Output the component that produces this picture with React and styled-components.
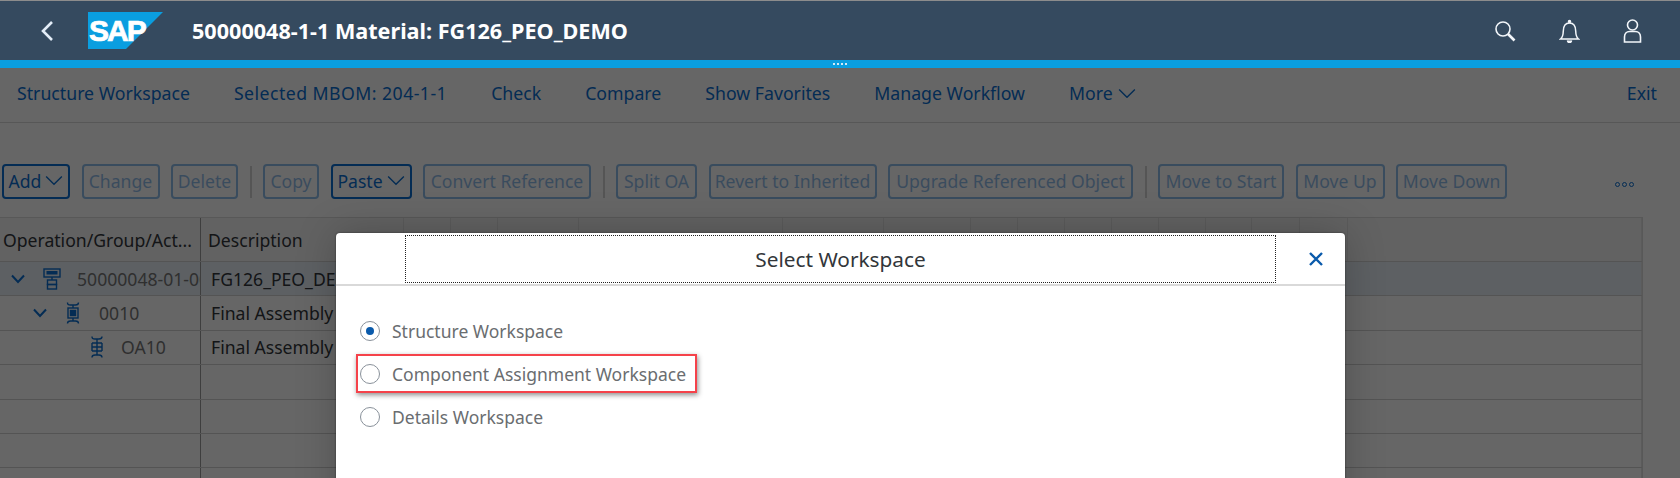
import React from "react";
import styled, { createGlobalStyle } from "styled-components";

const GlobalStyle = createGlobalStyle`
  html, body {
    margin: 0;
    height: 100%;
    overflow: hidden;
    background: #fff;
    font-family: "Noto Sans", "Open Sans", Arial, sans-serif;
  }
`;

const Page = styled.div`
  height: 478px;
  display: flex;
  flex-direction: column;
  overflow: hidden;
`;

const ShellBar = styled.header`
  height: 59px;
  flex: none;
  display: flex;
  align-items: center;
  background: #354a5f;
  border-top: 1px solid #8c8c8c;
  color: #fff;
`;

const BackButton = styled.div`
  width: 88px;
  display: flex;
  justify-content: center;
  padding-left: 6px;
  box-sizing: border-box;
`;

const Logo = styled.svg`
  width: 75px;
  height: 37px;
  display: block;
  flex: none;
`;

const Title = styled.h1`
  margin: 0 0 0 29px;
  font-size: 21.6px;
  font-weight: 700;
  flex: 1;
`;

const ShellIcons = styled.div`
  display: flex;
  gap: 43px;
  padding-right: 38px;
  align-items: center;
`;

const AccentBar = styled.div`
  height: 8px;
  flex: none;
  background: #0a9ee0;
  display: flex;
  justify-content: center;
  align-items: center;
  gap: 2px;
`;

const Grip = styled.span`
  width: 2px;
  height: 2px;
  background: #cfe9f7;
`;

const Workarea = styled.main`
  position: relative;
  flex: 1;
  display: flex;
  flex-direction: column;
  min-height: 0;
`;

const NavBar = styled.nav`
  height: 55px;
  flex: none;
  display: flex;
  align-items: center;
  gap: 44px;
  padding: 0 23px 4px 17px;
  box-sizing: border-box;
  border-bottom: 1px solid #d9d9d9;
  font-size: 17.7px;
  color: #0a6ed1;
`;

const NavItem = styled.span`
  display: flex;
  align-items: center;
  gap: 5px;
  margin-left: ${p => (p.$push ? "auto" : "0")};
  letter-spacing: ${p => p.$tracking || 0}px;
`;

const ActionBar = styled.div`
  height: 35px;
  flex: none;
  margin-top: 41px;
  display: flex;
  align-items: center;
  gap: 11.5px;
  padding-left: 2px;
  position: relative;
`;

const ActionButton = styled.button`
  width: ${p => p.$w}px;
  height: 35px;
  box-sizing: border-box;
  padding: 0 0 2px;
  display: flex;
  align-items: center;
  justify-content: center;
  gap: 4px;
  background: transparent;
  border: 2px solid #0a6ed1;
  border-radius: 4px;
  font: inherit;
  font-size: 17.6px;
  color: #0a6ed1;
  opacity: ${p => (p.disabled ? 0.45 : 1)};
`;

const Separator = styled.span`
  width: 2px;
  height: 32px;
  background: #d4d4d4;
`;

const OverflowDots = styled.div`
  position: absolute;
  left: 1615px;
  top: 18px;
  display: flex;
  gap: 2px;
`;

const Dot = styled.span`
  width: 5px;
  height: 5px;
  box-sizing: border-box;
  border: 1px solid #0a6ed1;
  border-radius: 50%;
`;

const Table = styled.div`
  margin-top: 18px;
  width: 1643px;
  border-top: 1px solid #dcdcdc;
  border-right: 1px solid #dcdcdc;
  box-sizing: border-box;
  font-size: 17.6px;
`;

const Row = styled.div`
  display: grid;
  grid-template-columns: 201px 203px 47px 47px 81px 204px 101px 87px 47px 47px 47px 47px 47px 46px 48px 48px 1fr;
  height: ${p => (p.$header ? "44px" : "34.4px")};
  box-sizing: border-box;
  border-bottom: 1px solid #d2d2d2;
  background: ${p => (p.$header ? "#f4f4f4" : p.$selected ? "#e8f0f8" : "transparent")};
`;

const Cell = styled.div`
  display: flex;
  align-items: center;
  overflow: hidden;
  white-space: nowrap;
  box-sizing: border-box;
  min-width: 0;
  padding-left: ${p => p.$indent || 7}px;
  border-right: 1px solid ${p => (p.$strong ? "#9c9c9c" : "#e3e3e3")};
  color: #32363a;
  grid-column: ${p => p.$span || "auto"};
`;

const Ellipsized = styled.span`
  overflow: hidden;
  text-overflow: ellipsis;
`;

const NodeLabel = styled.span`
  color: #777;
`;

const TreeChevron = styled.svg`
  width: 16px;
  height: 10px;
  flex: none;
  margin-right: ${p => p.$gap}px;
`;

const NodeIcon = styled.svg`
  width: 18px;
  height: 22px;
  flex: none;
  margin-right: ${p => p.$gap}px;
`;

const Blocker = styled.div`
  position: absolute;
  inset: 0;
  background: rgba(0, 0, 0, 0.6);
`;

const Dialog = styled.section`
  position: absolute;
  left: 336px;
  top: 165px;
  width: 1009px;
  height: 300px;
  background: #fff;
  border-radius: 4px 4px 0 0;
  box-shadow: 0 0 40px rgba(0, 0, 0, 0.22), 0 0 2px rgba(0, 0, 0, 0.5);
`;

const DialogHeader = styled.div`
  height: 53px;
  box-sizing: border-box;
  display: grid;
  grid-template-columns: 69px 871px 1fr;
  align-items: center;
  border-bottom: 2px solid #d9d9d9;
`;

const DialogTitle = styled.h2`
  grid-column: 2;
  height: 48px;
  margin: 0;
  box-sizing: border-box;
  border: 1px dotted #222;
  display: flex;
  align-items: center;
  justify-content: center;
  font-size: 20.8px;
  font-weight: 400;
  color: #32363a;
`;

const CloseIcon = styled.svg`
  justify-self: end;
  margin-right: 21px;
  width: 16px;
  height: 16px;
`;

const Options = styled.div`
  display: flex;
  flex-direction: column;
  gap: 15px;
  padding: 31px 0 0 24px;
`;

const Option = styled.label`
  position: relative;
  height: 28px;
  display: flex;
  align-items: center;
  gap: 12px;
  font-size: 17.5px;
  color: #6a6d70;

  ${p =>
    p.$highlight &&
    `
    &::after {
      content: "";
      position: absolute;
      left: -4px;
      top: -6px;
      width: 341px;
      height: 39px;
      box-sizing: border-box;
      border: 2px solid #f5424a;
      box-shadow: 1px 2px 5px rgba(0, 0, 0, 0.45);
    }
  `}
`;

const Radio = styled.span`
  width: 20px;
  height: 20px;
  flex: none;
  box-sizing: border-box;
  border: 1.5px solid #89919a;
  border-radius: 50%;
  display: flex;
  align-items: center;
  justify-content: center;

  &::before {
    content: "";
    width: 8px;
    height: 8px;
    border-radius: 50%;
    background: ${p => (p.$checked ? "#0a5aab" : "transparent")};
  }
`;

const navItems = [
  { label: "Structure Workspace" },
  { label: "Selected MBOM: 204-1-1", tracking: 0.45 },
  { label: "Check" },
  { label: "Compare" },
  { label: "Show Favorites" },
  { label: "Manage Workflow" }
];
const emptyColumns = Array.from({ length: 15 });

function Chevron({ size = 18, color = "currentColor" }) {
  return (
    <svg width={size} height={size * 0.6} viewBox="0 0 18 11" fill="none" stroke={color} strokeWidth="1.4">
      <path d="M1 1.5 9 9.5 17 1.5" />
    </svg>
  );
}

function TreeToggle({ gap }) {
  return (
    <TreeChevron $gap={gap} viewBox="0 0 16 10" fill="none" stroke="#0a6ed1" strokeWidth="2">
      <path d="M2 1.5 8 8 14 1.5" />
    </TreeChevron>
  );
}

function RootIcon() {
  return (
    <NodeIcon $gap={16} viewBox="0 0 18 22" fill="none" stroke="#0a6ed1" strokeWidth="1.4">
      <rect x="1" y="1" width="16" height="8" />
      <rect x="3.5" y="3" width="11" height="3.5" fill="#0a6ed1" stroke="none" />
      <path d="M9 9v3" />
      <rect x="4.5" y="12" width="9" height="4.5" />
      <rect x="4.5" y="16.5" width="9" height="4.5" />
    </NodeIcon>
  );
}

function OperationIcon() {
  return (
    <NodeIcon $gap={17} viewBox="0 0 18 22" fill="none" stroke="#0a6ed1" strokeWidth="1.4">
      <path d="M3.5 0.5c0 2 1 2.5 3 2.5h5c2 0 3-.5 3-2.5M9 3v3M3.5 21.5c0-2 1-2.5 3-2.5h5c2 0 3 .5 3 2.5M9 16v3" />
      <rect x="4" y="6" width="10" height="10" />
      <rect x="6.5" y="8.5" width="5" height="5" fill="#0a6ed1" />
    </NodeIcon>
  );
}

function ActivityIcon() {
  return (
    <NodeIcon $gap={15} viewBox="0 0 18 22" fill="none" stroke="#0a6ed1" strokeWidth="1.4">
      <path d="M4 .5c0 2 1 2.5 3 2.5h4c2 0 3-.5 3-2.5M4 21.5c0-2 1-2.5 3-2.5h4c2 0 3 .5 3 2.5M9 3v16M4 7h10M4 11h10M4 15h10M4 7v8M14 7v8" />
    </NodeIcon>
  );
}

export default function App() {
  return (
    <Page>
      <GlobalStyle />
      <ShellBar>
        <BackButton>
          <svg width="14" height="22" viewBox="0 0 14 22" fill="none" stroke="#e3edf7" strokeWidth="2.6">
            <path d="M12 2 3 11 12 20" />
          </svg>
        </BackButton>
        <Logo viewBox="0 0 75 37">
          <polygon points="0,0 75,0 38,37 0,37" fill="#0a9ee0" />
          <text x="1" y="29" fontSize="30" fontWeight="700" fontFamily="Liberation Sans" fill="#fff" letterSpacing="-2" stroke="#fff" strokeWidth="0.7">SAP</text>
        </Logo>
        <Title>50000048-1-1 Material: FG126_PEO_DEMO</Title>
        <ShellIcons>
          <svg width="22" height="22" viewBox="0 0 22 22" fill="none" stroke="#f2f6fa" strokeWidth="1.6">
            <circle cx="9" cy="9" r="7" />
            <path d="M14 14 20.5 20.5" strokeWidth="2.6" />
          </svg>
          <svg width="21" height="24" viewBox="0 0 21 24" fill="none" stroke="#f2f6fa" strokeWidth="1.5">
            <path d="M1.5 20c2.5-2 2.7-4 2.8-8 .1-5 2.5-8 6.2-8s6.1 3 6.2 8c.1 4 .3 6 2.8 8Z" />
            <circle cx="10.5" cy="2.5" r="1" fill="#f2f6fa" />
            <path d="M8.5 21.5a2 2 0 0 0 4 0" fill="#f2f6fa" />
          </svg>
          <svg width="19" height="24" viewBox="0 0 19 24" fill="none" stroke="#f2f6fa" strokeWidth="1.6">
            <circle cx="9.5" cy="6" r="5" />
            <path d="M1.5 23v-5c0-3 2-5.500 5-5.500h6c3 0 5 2.500 5 5.500v5Z" />
          </svg>
        </ShellIcons>
      </ShellBar>
      <AccentBar>
        <Grip />
        <Grip />
        <Grip />
        <Grip />
      </AccentBar>
      <Workarea>
        <NavBar>
          {navItems.map(item => (
            <NavItem key={item.label} $tracking={item.tracking}>
              {item.label}
            </NavItem>
          ))}
          <NavItem>
            More <Chevron />
          </NavItem>
          <NavItem $push>Exit</NavItem>
        </NavBar>
        <ActionBar>
          <ActionButton $w={68}>
            Add <Chevron />
          </ActionButton>
          <ActionButton disabled $w={78}>Change</ActionButton>
          <ActionButton disabled $w={67}>Delete</ActionButton>
          <Separator />
          <ActionButton disabled $w={56}>Copy</ActionButton>
          <ActionButton $w={81}>
            Paste <Chevron />
          </ActionButton>
          <ActionButton disabled $w={168}>Convert Reference</ActionButton>
          <Separator />
          <ActionButton disabled $w={81}>Split OA</ActionButton>
          <ActionButton disabled $w={168}>Revert to Inherited</ActionButton>
          <ActionButton disabled $w={245}>Upgrade Referenced Object</ActionButton>
          <Separator />
          <ActionButton disabled $w={126}>Move to Start</ActionButton>
          <ActionButton disabled $w={89}>Move Up</ActionButton>
          <ActionButton disabled $w={111}>Move Down</ActionButton>
          <OverflowDots>
            <Dot />
            <Dot />
            <Dot />
          </OverflowDots>
        </ActionBar>
        <Table>
          <Row $header>
            <Cell $strong $indent={3}>
              <Ellipsized>Operation/Group/Act...</Ellipsized>
            </Cell>
            <Cell>Description</Cell>
            {emptyColumns.map((_, i) => (
              <Cell key={i} />
            ))}
          </Row>
          <Row $selected>
            <Cell $strong $indent={10}>
              <TreeToggle gap={17} />
              <RootIcon />
              <NodeLabel>50000048-01-001</NodeLabel>
            </Cell>
            <Cell $span="2 / -1" $indent={10}>FG126_PEO_DEMO</Cell>
          </Row>
          <Row>
            <Cell $strong $indent={32}>
              <TreeToggle gap={16} />
              <OperationIcon />
              <NodeLabel>0010</NodeLabel>
            </Cell>
            <Cell $span="2 / -1" $indent={10}>Final Assembly</Cell>
          </Row>
          <Row>
            <Cell $strong $indent={88}>
              <ActivityIcon />
              <NodeLabel>OA10</NodeLabel>
            </Cell>
            <Cell $span="2 / -1" $indent={10}>Final Assembly</Cell>
          </Row>
          {[0, 1, 2, 3].map(i => (
            <Row key={i}>
              <Cell $strong />
              <Cell $span="2 / -1" />
            </Row>
          ))}
        </Table>
        <Blocker />
        <Dialog>
          <DialogHeader>
            <DialogTitle>Select Workspace</DialogTitle>
            <CloseIcon viewBox="0 0 16 16" fill="none" stroke="#0a5aab" strokeWidth="2.4">
              <path d="M2 2 14 14M14 2 2 14" />
            </CloseIcon>
          </DialogHeader>
          <Options>
            <Option>
              <Radio $checked />
              Structure Workspace
            </Option>
            <Option $highlight>
              <Radio />
              Component Assignment Workspace
            </Option>
            <Option>
              <Radio />
              Details Workspace
            </Option>
          </Options>
        </Dialog>
      </Workarea>
    </Page>
  );
}
